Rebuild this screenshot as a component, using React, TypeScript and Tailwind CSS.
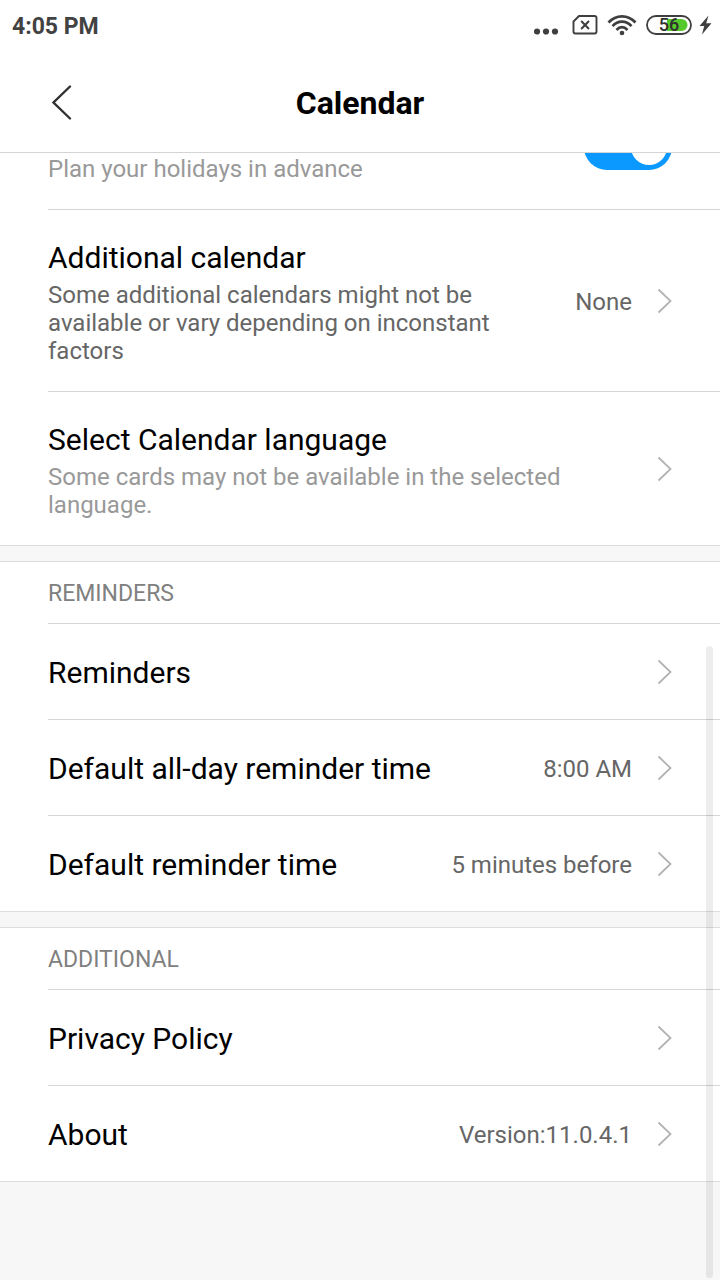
import type { ReactNode } from "react";

function StatusBar() {
  return (
    <div className="flex h-13 items-center justify-between pr-2 pl-3">
      <time className="pt-0.5 text-[23px] leading-8 font-bold text-[#424242]">4:05 PM</time>
      <div className="flex items-center pb-0.5">
        <svg width="158" height="24" viewBox="0 0 158 24" fill="none" aria-hidden="true">
          <g fill="#3f3f3f">
            <circle cx="3" cy="18.5" r="3.1" />
            <circle cx="12" cy="18.5" r="3.1" />
            <circle cx="21" cy="18.5" r="3.1" />
          </g>
          <path
            d="M45 3H60.500Q62.500 3 62.500 5V18.500Q62.500 20.500 60.500 20.500H41.500Q39.500 20.500 39.500 18.500V8.500Z"
            stroke="#3f3f3f"
            strokeWidth="1.9"
            strokeLinejoin="round"
          />
          <path d="M47.200 8L55 16M55 8L47.200 16" stroke="#3f3f3f" strokeWidth="2" />
          <g stroke="#3f3f3f" strokeWidth="2.7">
            <path d="M74.500 9.500C82 1.200 94 1.200 101.500 9.500" />
            <path d="M78.500 13.200C84 7.200 92 7.200 97.500 13.200" />
            <path d="M82.500 17C86 13.200 90 13.200 93.500 17" />
          </g>
          <circle cx="88" cy="20" r="2.3" fill="#3f3f3f" />
        </svg>
        <span className="relative -ml-[46px] flex h-5 w-[46px] items-center justify-center">
          <svg className="absolute inset-0" width="46" height="20" viewBox="0 0 46 20" fill="none" aria-hidden="true">
            <rect x="1" y="1" width="44" height="18" rx="9" stroke="#3f3f3f" strokeWidth="1.8" />
            <path d="M21 4H35.500a6 6 0 0 1 0 12H21Z" fill="#55c82b" />
          </svg>
          <span className="relative text-lg leading-5 font-medium text-[#303030]">56</span>
        </span>
        <svg className="ml-[7px]" width="13" height="20" viewBox="0 0 13 20" aria-hidden="true">
          <path d="M9.500 0.500L0.500 11H5.200L3 19.500L12.500 8.200H7.200Z" fill="#3f3f3f" />
        </svg>
      </div>
    </div>
  );
}

function Chevron() {
  return (
    <svg className="shrink-0" width="16" height="26" viewBox="0 0 16 26" fill="none" aria-hidden="true">
      <path d="M2.500 1.500L14.500 13L2.500 24.500" stroke="#b3b3b3" strokeWidth="1.8" />
    </svg>
  );
}

function Label({ title, note, muted }: { title?: string; note?: string; muted?: boolean }) {
  return (
    <span className={`flex min-w-0 flex-1 flex-col gap-px ${note ? "" : "pt-0.5"}`}>
      <span className="min-h-11 text-3xl leading-11 text-black">{title}</span>
      {note && (
        <span className={`text-2xl leading-7 ${muted ? "text-[#999999]" : "text-[#666666]"}`}>{note}</span>
      )}
    </span>
  );
}

const rowClass =
  "ml-12 flex items-center border-b border-[#d6d6d6] pr-12 text-left group-last:border-b-0";

function Row({
  title,
  note,
  muted,
  value,
}: {
  title: string;
  note?: string;
  muted?: boolean;
  value?: string;
}) {
  return (
    <li className="group">
      <a href="#" className={`${rowClass} ${note ? "py-[26px]" : "pt-[25px] pb-6"}`}>
        <Label title={title} note={note} muted={muted} />
        {value && <span className="ml-6 shrink-0 pt-0.5 text-2xl leading-7 text-[#666666]">{value}</span>}
        <span className="ml-6 flex">
          <Chevron />
        </span>
      </a>
    </li>
  );
}

function Section({ heading, children }: { heading?: string; children: ReactNode }) {
  return (
    <section className="mb-[15px] border-b border-[#dddddd] bg-white not-first:border-t">
      {heading && (
        <h2 className="ml-12 border-b border-[#d6d6d6] pt-[18px] pb-[15px] text-[23px] leading-7 text-[#808080]">
          {heading}
        </h2>
      )}
      <ul>{children}</ul>
    </section>
  );
}

export default function App() {
  return (
    <div className="relative min-h-screen bg-[#f7f7f7] font-['Roboto',sans-serif]">
      <header className="border-b border-[#d4d4d4] bg-white">
        <StatusBar />
        <div className="grid h-25 grid-cols-[1fr_auto_1fr] items-center px-12">
          <button type="button" aria-label="Back" className="flex w-7">
            <svg width="28" height="36" viewBox="0 0 28 36" fill="none" aria-hidden="true">
              <path
                d="M22 2.500L5.500 18.500L22 34.500"
                stroke="#303030"
                strokeWidth="2.4"
                strokeLinecap="round"
              />
            </svg>
          </button>
          <h1 className="pt-0.5 text-[32px] leading-10 font-bold text-black">Calendar</h1>
        </div>
      </header>

      <main className="overflow-hidden">
        <div className="-mt-[69px]">
          <Section>
            <li className="group">
              <label className={`${rowClass} py-[26px]`}>
                <Label note="Plan your holidays in advance" muted />
                <span className="relative flex">
                  <input
                    type="checkbox"
                    role="switch"
                    defaultChecked
                    className="peer h-[46px] w-[88px] appearance-none rounded-full bg-[#d9d9d9] checked:bg-[#0b99ff]"
                  />
                  <span className="pointer-events-none absolute top-[5px] left-[5px] size-9 rounded-full bg-white peer-checked:right-[5px] peer-checked:left-auto" />
                </span>
              </label>
            </li>
            <Row
              title="Additional calendar"
              note="Some additional calendars might not be available or vary depending on inconstant factors"
              value="None"
            />
            <Row
              title="Select Calendar language"
              note="Some cards may not be available in the selected language."
              muted
            />
          </Section>
          <Section heading="REMINDERS">
            <Row title="Reminders" />
            <Row title="Default all-day reminder time" value="8:00 AM" />
            <Row title="Default reminder time" value="5 minutes before" />
          </Section>
          <Section heading="ADDITIONAL">
            <Row title="Privacy Policy" />
            <Row title="About" value="Version:11.0.4.1" />
          </Section>
        </div>
      </main>

      <div className="pointer-events-none absolute top-[646px] right-[7px] bottom-0.5 w-[7px] rounded-full bg-black/7" />
    </div>
  );
}
